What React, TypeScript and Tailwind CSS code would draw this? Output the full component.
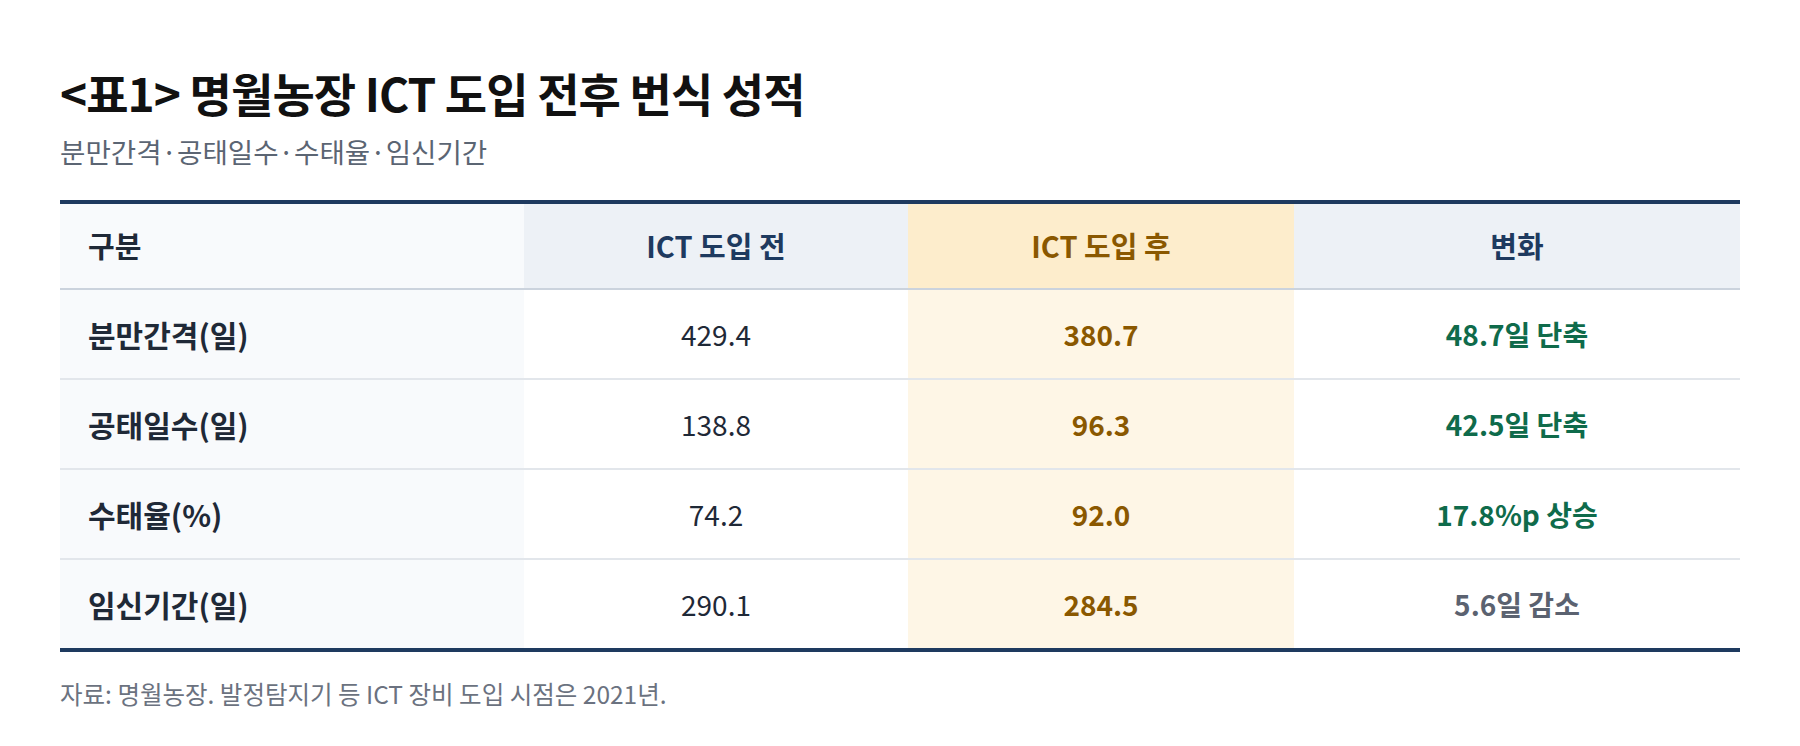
const rows = [
  { label: "분만간격(일)", before: "429.4", after: "380.7", change: "48.7일 단축", good: true },
  { label: "공태일수(일)", before: "138.8", after: "96.3", change: "42.5일 단축", good: true },
  { label: "수태율(%)", before: "74.2", after: "92.0", change: "17.8%p 상승", good: true },
  { label: "임신기간(일)", before: "290.1", after: "284.5", change: "5.6일 감소", good: false },
];

export default function App() {
  return (
    <div
      className="min-h-[746px] bg-white px-[60px] pt-[62px] text-[#111827]"
      style={{ fontFamily: '"Noto Sans CJK KR", "Noto Sans", sans-serif' }}
    >
      <h1 className="text-[46px] font-bold leading-[60px] tracking-[-0.02em] text-[#111111]">
        &lt;표1&gt; 명월농장 ICT 도입 전후 번식 성적
      </h1>
      <p className="mt-[11px] text-[27.6px] leading-[36px] text-[#5b6573]">분만간격·공태일수·수태율·임신기간</p>

      <div className="mt-[31px] w-[1680px] border-y-4 border-[#1e3a5f]">
        {/* header */}
        <div className="grid grid-cols-[464px_384px_386px_446px] border-b-2 border-[#cbd3dd] text-[29px] font-bold">
          <div className="flex h-[84px] items-center bg-[#f8fafc] pl-[28px] text-[#1f2937]">구분</div>
          <div className="flex h-[84px] items-center justify-center bg-[#edf1f6] text-[#1e3a5f]">ICT 도입 전</div>
          <div className="flex h-[84px] items-center justify-center bg-[#fdedcc] text-[#8a5800]">ICT 도입 후</div>
          <div className="flex h-[84px] items-center justify-center bg-[#edf1f6] text-[#1e3a5f]">변화</div>
        </div>

        {rows.map((r, i) => (
          <div
            key={r.label}
            className={
              "grid grid-cols-[464px_384px_386px_446px] text-[28px] " +
              (i < rows.length - 1 ? "border-b-2 border-[#e2e6eb]" : "")
            }
          >
            <div className="flex h-[88px] items-center bg-[#f8fafc] pl-[28px] text-[30px] font-bold text-[#1f2937]">
              {r.label}
            </div>
            <div className="flex h-[88px] items-center justify-center bg-white text-[#1f2937]">{r.before}</div>
            <div className="flex h-[88px] items-center justify-center bg-[#fef6e6] font-bold text-[#8a5800]">{r.after}</div>
            <div
              className={
                "flex h-[88px] items-center justify-center bg-white font-bold " +
                (r.good ? "text-[#0f6b4b]" : "text-[#5b6270]")
              }
            >
              {r.change}
            </div>
          </div>
        ))}
      </div>

      <p className="mt-[25px] text-[24.5px] leading-[34px] text-[#6b7280]">
        자료: 명월농장. 발정탐지기 등 ICT 장비 도입 시점은 2021년.
      </p>
    </div>
  );
}
